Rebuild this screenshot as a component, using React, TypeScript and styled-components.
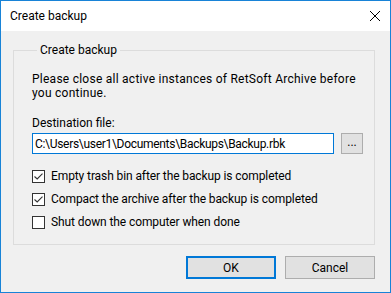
import * as React from 'react';
import styled, { createGlobalStyle } from 'styled-components';

const GlobalStyle = createGlobalStyle`
  html, body {
    margin: 0;
    padding: 0;
    background: #ffffff;
  }
  body {
    font-family: Roboto, "Noto Sans", sans-serif;
    font-size: 12px;
    color: #000000;
  }
`;

const Window = styled.div`
  width: 391px;
  height: 293px;
  box-sizing: border-box;
  border: 1px solid #1883d7;
  display: flex;
  flex-direction: column;
  background: #f0f0f0;
`;

const TitleBar = styled.div`
  height: 30px;
  flex: none;
  background: #ffffff;
  display: flex;
  align-items: center;
  justify-content: space-between;
  padding: 0 9px 0 9px;
`;

const Title = styled.span`
  font-size: 12px;
`;

const CloseIcon = styled.svg`
  width: 10px;
  height: 10px;
  margin-right: 1px;
`;

const Body = styled.div`
  flex: 1;
  padding: 11px 15px 0 12px;
  display: flex;
  flex-direction: column;
`;

const Group = styled.fieldset`
  margin: 0;
  padding: 14px 10px 15px 18px;
  border: 1px solid #dcdcdc;
  min-width: 0;
`;

const Legend = styled.legend`
  padding: 0 3px;
  margin-left: 5px;
  line-height: 16px;
`;

const Message = styled.p`
  margin: 0 0 15px;
  line-height: 14px;
  letter-spacing: 0.25px;
`;

const FieldLabel = styled.div`
  line-height: 16px;
  margin-bottom: 2px;
`;

const FileRow = styled.div`
  display: flex;
  gap: 7px;
  margin-bottom: 16px;
`;

const PathInput = styled.input`
  width: 302px;
  height: 21px;
  box-sizing: border-box;
  border: 1px solid #0078d7;
  background: #ffffff;
  font: inherit;
  letter-spacing: -0.3px;
  padding: 0 2px;
  outline: none;
`;

const BrowseButton = styled.button`
  width: 22px;
  height: 21px;
  box-sizing: border-box;
  border: 1px solid #adadad;
  background: #e1e1e1;
  font: inherit;
  padding: 0 0 4px;
  line-height: 1;
`;

const OptionList = styled.div`
  display: flex;
  flex-direction: column;
  gap: 10px;
`;

const Option = styled.label`
  display: flex;
  align-items: center;
  gap: 6px;
  height: 13px;
  line-height: 13px;
  letter-spacing: -0.1px;
`;

const Box = styled.span`
  width: 13px;
  height: 13px;
  box-sizing: border-box;
  border: 1px solid #333333;
  background: #ffffff;
  display: flex;
  align-items: center;
  justify-content: center;
  flex: none;
`;

const Footer = styled.div`
  display: flex;
  justify-content: flex-end;
  gap: 9px;
  padding-top: 11px;
`;

const DialogButton = styled.button<{ $default?: boolean }>`
  width: 90px;
  height: 23px;
  box-sizing: border-box;
  border: ${(p) => (p.$default ? '2px solid #0078d7' : '1px solid #adadad')};
  background: #e1e1e1;
  font: inherit;
  color: #000000;
  padding: 0;
`;

const Check = () => (
  <svg width="9" height="7" viewBox="0 0 9 7">
    <path d="M0.5 3.5 L3.2 6 L8.5 0.6" fill="none" stroke="#333333" strokeWidth="1.1" />
  </svg>
);

const CheckOption = ({ checked, label }: { checked: boolean; label: string }) => (
  <Option>
    <Box>{checked && <Check />}</Box>
    <span>{label}</span>
  </Option>
);

export default function App(): React.ReactElement {
  return (
    <>
      <GlobalStyle />
      <Window>
        <TitleBar>
          <Title>Create backup</Title>
          <CloseIcon viewBox="0 0 10 10">
            <path d="M0 0 L10 10 M10 0 L0 10" stroke="#000000" strokeWidth="1" />
          </CloseIcon>
        </TitleBar>
        <Body>
          <Group>
            <Legend>Create backup</Legend>
            <Message>
              Please close all active instances of RetSoft Archive before
              <br />
              you continue.
            </Message>
            <FieldLabel>Destination file:</FieldLabel>
            <FileRow>
              <PathInput readOnly value="C:\Users\user1\Documents\Backups\Backup.rbk" />
              <BrowseButton>...</BrowseButton>
            </FileRow>
            <OptionList>
              <CheckOption checked label="Empty trash bin after the backup is completed" />
              <CheckOption checked label="Compact the archive after the backup is completed" />
              <CheckOption checked={false} label="Shut down the computer when done" />
            </OptionList>
          </Group>
          <Footer>
            <DialogButton $default>OK</DialogButton>
            <DialogButton>Cancel</DialogButton>
          </Footer>
        </Body>
      </Window>
    </>
  );
}
